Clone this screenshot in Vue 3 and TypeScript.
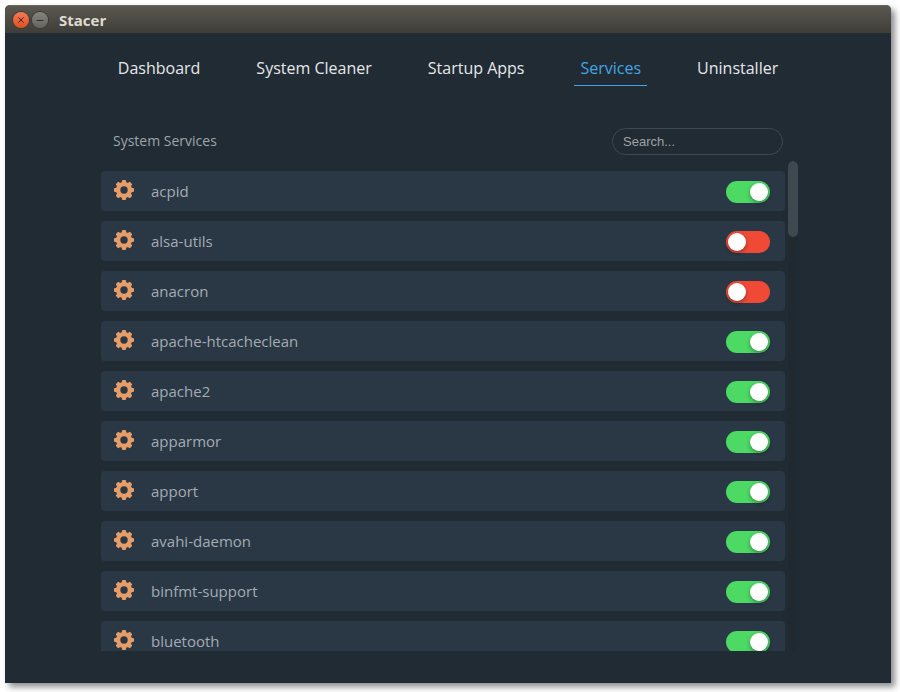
<script setup lang="ts">
import { ref } from 'vue'

interface Service {
  name: string
  active: boolean
}

const tabs: string[] = ['Dashboard', 'System Cleaner', 'Startup Apps', 'Services', 'Uninstaller']
const currentTab = ref('Services')
const query = ref('')

const services = ref<Service[]>([
  { name: 'acpid', active: true },
  { name: 'alsa-utils', active: false },
  { name: 'anacron', active: false },
  { name: 'apache-htcacheclean', active: true },
  { name: 'apache2', active: true },
  { name: 'apparmor', active: true },
  { name: 'apport', active: true },
  { name: 'avahi-daemon', active: true },
  { name: 'binfmt-support', active: true },
  { name: 'bluetooth', active: true },
])

const teeth: number[] = [0, 45, 90, 135, 180, 225, 270, 315]

const matches = (s: Service) => s.name.includes(query.value.trim().toLowerCase())

const thumbTop = ref(0)
function onScroll(e: Event) {
  thumbTop.value = (e.target as HTMLElement).scrollTop
}
</script>

<template>
  <div class="desktop">
    <div class="window">
      <header class="titlebar">
        <button class="wm close" type="button" aria-label="Close">
          <svg viewBox="0 0 16 16"><path d="M5.3 5.3l5.4 5.4M10.7 5.3l-5.4 5.4" /></svg>
        </button>
        <button class="wm minimize" type="button" aria-label="Minimize">
          <svg viewBox="0 0 16 16"><path d="M4.500 8.500h7" /></svg>
        </button>
        <h1 class="title">Stacer</h1>
      </header>

      <nav class="tabs">
        <a
          v-for="tab in tabs"
          :key="tab"
          href="#"
          class="tab"
          :class="{ current: tab === currentTab }"
          @click.prevent="currentTab = tab"
        >{{ tab }}</a>
      </nav>

      <main class="content">
        <div class="toolbar">
          <label class="heading" for="search">System Services</label>
          <input id="search" v-model="query" class="search" type="text" placeholder="Search..." />
        </div>

        <div class="scroller">
          <ul class="list" @scroll="onScroll">
            <li v-for="s in services.filter(matches)" :key="s.name" class="row">
              <svg class="gear" viewBox="0 0 20 20" aria-hidden="true">
                <circle class="ring" cx="10" cy="10" r="5.9" />
                <rect
                  v-for="angle in teeth"
                  :key="angle"
                  x="7.9"
                  y="0"
                  width="4.2"
                  height="4.500"
                  rx="1.1"
                  :transform="`rotate(${angle} 10 10)`"
                />
              </svg>
              <label class="name" :for="'svc-' + s.name">{{ s.name }}</label>
              <input :id="'svc-' + s.name" v-model="s.active" class="switch" type="checkbox" />
            </li>
          </ul>
          <div class="track">
            <div class="thumb" :style="{ marginTop: thumbTop + 'px' }"></div>
          </div>
        </div>
      </main>
    </div>
  </div>
</template>

<style>
body {
  background: #fff;
}
</style>

<style scoped>
* {
  box-sizing: border-box;
}

.desktop {
  height: 100vh;
  padding: 5px 9px 9px 5px;
  font-family: 'Open Sans', 'Noto Sans', sans-serif;
  overflow: hidden;
}

.window {
  display: flex;
  flex-direction: column;
  height: 100%;
  padding-bottom: 32px;
  background: #212b33;
  border-radius: 5px 5px 0 0;
  box-shadow: 4px 4px 6px rgba(0, 0, 0, 0.45);
}

.titlebar {
  display: flex;
  flex: none;
  align-items: center;
  gap: 3px;
  height: 28px;
  padding: 0 8px;
  background: linear-gradient(#5b5850, #3e3d38);
  border-top: 1px solid #6a675e;
  border-radius: 5px 5px 0 0;
}

.wm {
  width: 16px;
  height: 16px;
  padding: 0;
  border: 0;
  border-radius: 50%;
  box-shadow: 0 0 0 1px #3c3a35;
}

.wm svg {
  display: block;
  width: 16px;
  height: 16px;
  fill: none;
  stroke: #3a2a22;
  stroke-width: 1;
}

.close {
  background: linear-gradient(#f47b55, #e2501f);
}

.minimize {
  background: linear-gradient(#85837e, #66645e);
}

.title {
  margin: 0 0 0 8px;
  color: #dfdbd2;
  font-size: 15px;
  font-weight: 700;
  line-height: 20px;
}

.tabs {
  display: flex;
  flex: none;
  justify-content: center;
  gap: 44px;
  padding-top: 17px;
}

.tab {
  padding: 6px 6px 5px;
  border-bottom: 1px solid transparent;
  color: #e6e8e9;
  font-size: 16px;
  line-height: 24px;
  text-decoration: none;
}

.tab.current {
  color: #43a6e2;
  border-bottom-color: #43a6e2;
}

.content {
  display: flex;
  flex: 1;
  flex-direction: column;
  align-self: center;
  width: 100%;
  max-width: 700px;
  min-height: 0;
  padding-top: 42px;
}

.toolbar {
  display: flex;
  align-items: flex-start;
  justify-content: space-between;
  padding: 0 15px 6px;
}

.heading {
  color: #9ea5ac;
  font-size: 14px;
  line-height: 26px;
}

.search {
  width: 171px;
  height: 27px;
  padding: 0 10px;
  background: transparent;
  border: 1px solid #3e4850;
  border-radius: 14px;
  outline: 0;
  color: #c5cace;
  font-family: 'Liberation Sans', Arial, sans-serif;
  font-size: 13px;
}

.search::placeholder {
  color: #a0a2a4;
}

.scroller {
  display: flex;
  flex: 1;
  gap: 3px;
  min-height: 0;
  padding-left: 3px;
}

.list {
  display: flex;
  flex: 1;
  flex-direction: column;
  gap: 10px;
  margin: 0;
  padding: 10px 0;
  list-style: none;
  overflow-y: auto;
  scrollbar-width: none;
}

.row {
  display: flex;
  flex: none;
  align-items: center;
  height: 40px;
  padding: 0 15px 0 13px;
  background: #2a3845;
  border-radius: 4px;
}

.gear {
  width: 20px;
  height: 20px;
  margin-bottom: 2px;
  fill: #e69d68;
}

.ring {
  fill: none;
  stroke: #e69d68;
  stroke-width: 4.4;
}

.name {
  flex: 1;
  padding-left: 17px;
  color: #a4abb3;
  font-size: 15px;
  line-height: 20px;
}

.switch {
  width: 44px;
  height: 22px;
  margin: 2px 0 0;
  padding: 2px;
  appearance: none;
  background: #f04a37;
  border-radius: 11px;
  cursor: pointer;
}

.switch::before {
  content: '';
  display: block;
  width: 18px;
  height: 18px;
  background: #fff;
  border-radius: 50%;
  box-shadow: 0 2px 4px rgba(0, 0, 0, 0.35);
}

.switch:checked {
  background: #4cd964;
}

.switch:checked::before {
  margin-left: auto;
}

.track {
  width: 10px;
  background: #20292f;
  border-radius: 5px;
  overflow: hidden;
}

.thumb {
  height: 76px;
  background: #3e484f;
  border-radius: 5px;
}
</style>
